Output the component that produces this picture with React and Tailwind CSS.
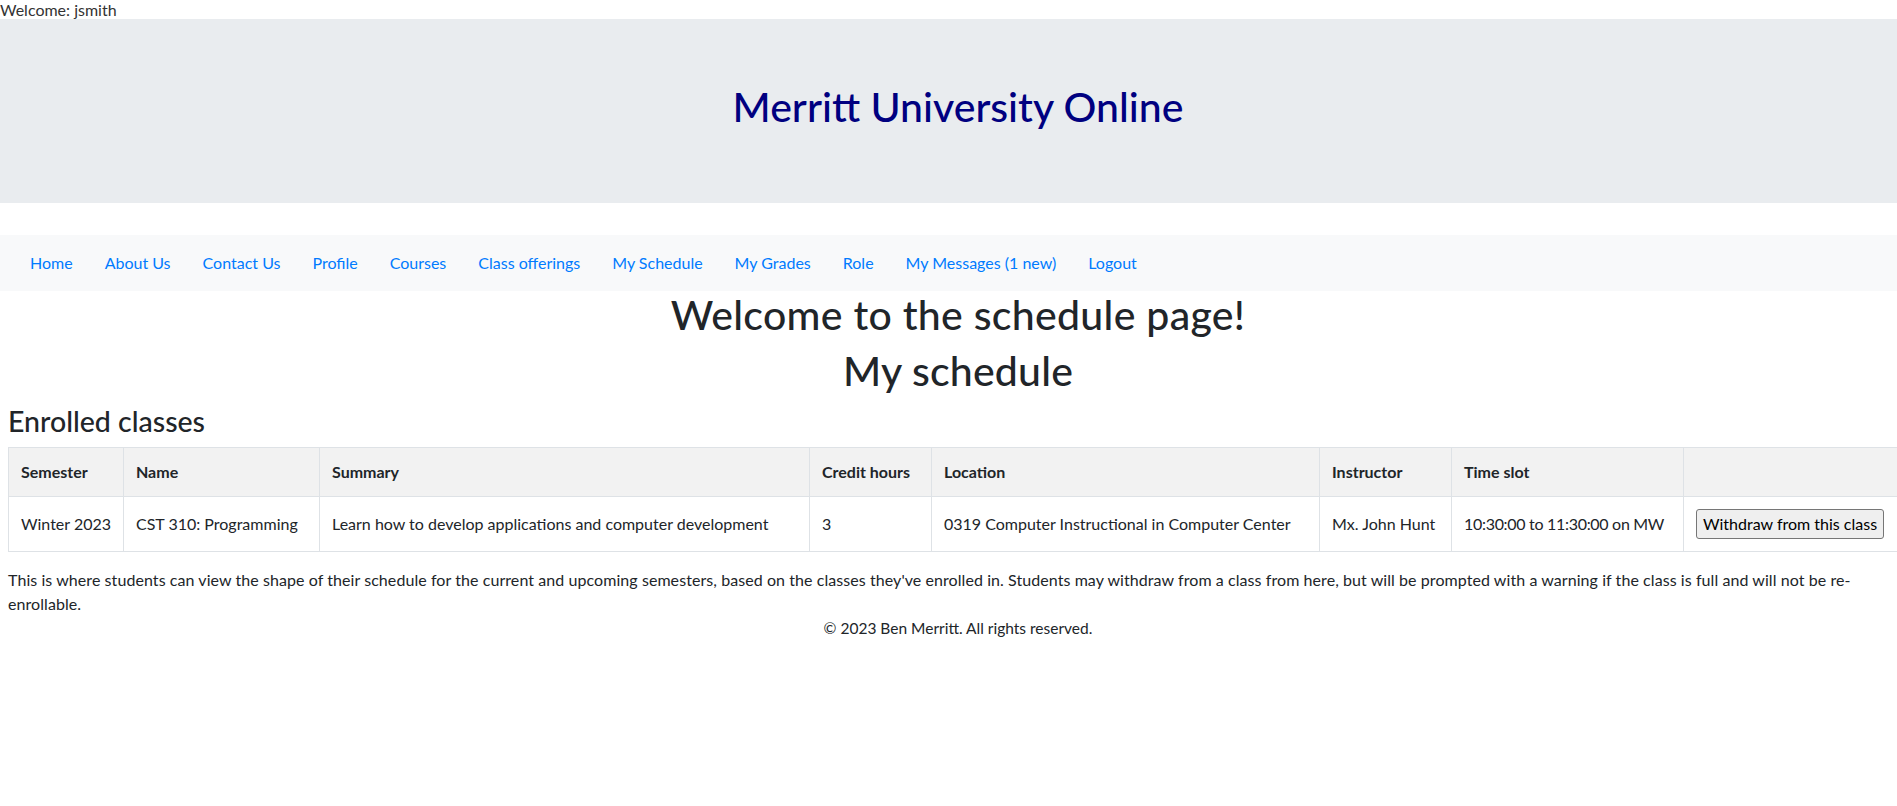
import React from "react";

const navLinks = [
  "Home",
  "About Us",
  "Contact Us",
  "Profile",
  "Courses",
  "Class offerings",
  "My Schedule",
  "My Grades",
  "Role",
  "My Messages (1 new)",
  "Logout",
];

const columns = [
  { label: "Semester", width: "w-[115px]" },
  { label: "Name", width: "w-[196px]" },
  { label: "Summary", width: "w-[490px]" },
  { label: "Credit hours", width: "w-[122px]" },
  { label: "Location", width: "w-[388px]" },
  { label: "Instructor", width: "w-[132px]" },
  { label: "Time slot", width: "w-[232px]" },
  { label: "", width: "w-[225px]" },
];

const enrolled = [
  {
    semester: "Winter 2023",
    name: "CST 310: Programming",
    summary: "Learn how to develop applications and computer development",
    credits: "3",
    location: "0319 Computer Instructional in Computer Center",
    instructor: "Mx. John Hunt",
    slot: "10:30:00 to 11:30:00 on MW",
  },
];

const App = () => {
  return (
    <div className="w-full min-h-screen overflow-hidden bg-white">
      <div className="w-[1916px] font-['Lato','Open_Sans',sans-serif] text-[#212529]">
        <div className="text-[16px] leading-[19px] text-[#333]">Welcome: jsmith</div>

        {/* Jumbotron */}
        <div className="bg-[#e9ecef] px-8 py-16 mb-8 text-center">
          <h1 className="text-[41px] leading-[48px] font-medium text-[#000080] mb-2">
            Merritt University Online
          </h1>
        </div>

        {/* Navbar */}
        <nav className="h-[56px] bg-[#f8f9fa] flex items-center pl-[14px]">
          {navLinks.map((link) => (
            <a key={link} href="#" className="px-4 py-2 text-[16px] leading-6 text-[#007bff]">
              {link}
            </a>
          ))}
        </nav>

        <div className="mx-2">
          <h1 className="text-[41px] leading-[48px] font-medium text-center mb-2 tracking-[0.3px]">
            Welcome to the schedule page!
          </h1>
          <h1 className="text-[41px] leading-[48px] font-medium text-center mb-2 tracking-[0.2px]">
            My schedule
          </h1>
          <h3 className="text-[28.5px] leading-[36px] font-medium mb-2">Enrolled classes</h3>

          <table className="w-full table-fixed border-collapse border border-[#dee2e6] text-[16px] leading-6 mb-4">
            <colgroup>
              {columns.map((c, i) => (
                <col key={i} className={c.width} />
              ))}
            </colgroup>
            <thead>
              <tr className="bg-[#f2f2f2]">
                {columns.map((c, i) => (
                  <th key={i} className="border border-[#dee2e6] px-3 py-3 text-left font-bold align-middle">
                    {c.label}
                  </th>
                ))}
              </tr>
            </thead>
            <tbody>
              {enrolled.map((row) => (
                <tr key={row.name}>
                  <td className="border border-[#dee2e6] px-3 py-3 align-middle">{row.semester}</td>
                  <td className="border border-[#dee2e6] px-3 py-3 align-middle">{row.name}</td>
                  <td className="border border-[#dee2e6] px-3 py-3 align-middle">{row.summary}</td>
                  <td className="border border-[#dee2e6] px-3 py-3 align-middle">{row.credits}</td>
                  <td className="border border-[#dee2e6] px-3 py-3 align-middle">{row.location}</td>
                  <td className="border border-[#dee2e6] px-3 py-3 align-middle">{row.instructor}</td>
                  <td className="border border-[#dee2e6] px-3 py-3 align-middle whitespace-nowrap tracking-[-0.3px]">
                    {row.slot}
                  </td>
                  <td className="border border-[#dee2e6] px-3 py-3 align-middle">
                    <button className="h-[30px] px-[6px] bg-[#efefef] border border-[#767676] rounded-[3px] text-[16px] leading-6 text-black font-normal">
                      Withdraw from this class
                    </button>
                  </td>
                </tr>
              ))}
            </tbody>
          </table>

          <p className="text-[16px] leading-6 tracking-[0.07px] pr-[40px]">
            This is where students can view the shape of their schedule for the current and upcoming
            semesters, based on the classes they've enrolled in. Students may withdraw from a class from
            here, but will be prompted with a warning if the class is full and will not be re-enrollable.
          </p>
          <footer className="text-[15.5px] leading-6 text-center">© 2023 Ben Merritt. All rights reserved.</footer>
        </div>
      </div>
    </div>
  );
};

export default App;
